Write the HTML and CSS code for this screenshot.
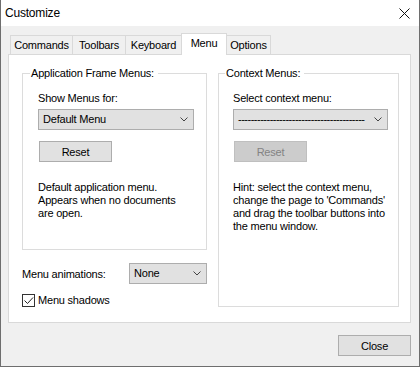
FILE: index.html
```html
<!DOCTYPE html>
<html lang="en">
<head>
  <meta charset="UTF-8">
  <title>Customize</title>
  <link rel="stylesheet" href="styles.css">
</head>
<body>
  <div class="window">
    <div class="titlebar">
      <span class="title">Customize</span>
      <svg class="close-x" width="11" height="11" viewBox="0 0 11 11">
        <path d="M0.5 0.5 L10.5 10.5 M10.5 0.5 L0.5 10.5" stroke="#111" stroke-width="1" fill="none"/>
      </svg>
    </div>

    <div class="client">
      <div class="tabs">
        <div class="tab tab-commands">Commands</div>
        <div class="tab tab-toolbars">Toolbars</div>
        <div class="tab tab-keyboard">Keyboard</div>
        <div class="tab tab-menu selected">Menu</div>
        <div class="tab tab-options">Options</div>
      </div>

      <div class="panel">
        <div class="left-col">
          <div class="group group-app">
            <div class="legend">Application Frame Menus:</div>
            <div class="label">Show Menus for:</div>
            <div class="combo combo-wide">
              <span>Default Menu</span>
              <svg class="chev" width="8" height="5" viewBox="0 0 8 5"><path d="M0.5 0.5 L4 4 L7.5 0.5" stroke="#444" fill="none"/></svg>
            </div>
            <div class="btn btn-reset">Reset</div>
            <p class="note">Default application menu.<br>Appears when no documents<br>are open.</p>
          </div>

          <div class="anim-row">
            <span>Menu animations:</span>
            <div class="combo combo-small">
              <span>None</span>
              <svg class="chev" width="8" height="5" viewBox="0 0 8 5"><path d="M0.5 0.5 L4 4 L7.5 0.5" stroke="#444" fill="none"/></svg>
            </div>
          </div>

          <div class="check-row">
            <span class="checkbox">
              <svg width="11" height="11" viewBox="0 0 11 11"><path d="M1.5 5.5 L4.5 8.5 L10 2.5" stroke="#222" fill="none"/></svg>
            </span>
            <span>Menu shadows</span>
          </div>
        </div>

        <div class="group group-ctx">
          <div class="legend">Context Menus:</div>
          <div class="label">Select context menu:</div>
          <div class="combo combo-ctx">
            <span class="dashes">----------------------------------------</span>
            <svg class="chev" width="8" height="5" viewBox="0 0 8 5"><path d="M0.5 0.5 L4 4 L7.5 0.5" stroke="#444" fill="none"/></svg>
          </div>
          <div class="btn btn-reset disabled">Reset</div>
          <p class="note">Hint: select the context menu,<br>change the page to 'Commands'<br>and drag the toolbar buttons into<br>the menu window.</p>
        </div>
      </div>

      <div class="footer">
        <div class="btn btn-close">Close</div>
      </div>
    </div>
  </div>
</body>
</html>
```

FILE: styles.css
```css
* {
  box-sizing: border-box;
}
body {
  margin: 0;
  font-family: 'Liberation Sans', Arial, sans-serif;
  font-size: 11px;
  letter-spacing: -0.2px;
  color: #000;
  background: #fff;
}
.window {
  width: 420px;
  height: 367px;
  border: 1px solid #6e6e6e;
  border-top: none;
  background: #f0f0f0;
  display: flex;
  flex-direction: column;
}
.titlebar {
  height: 26px;
  background: #fff;
  display: flex;
  align-items: center;
  justify-content: space-between;
  padding-left: 4px;
  padding-right: 9px;
}
.title {
  font-size: 12px;
  line-height: 26px;
}
.close-x {
  margin-top: 1px;
}

/* tabs */
.tabs {
  display: flex;
  align-items: flex-end;
  height: 21px;
  margin-top: 7px;
  margin-left: 9px;
}
.tab {
  height: 19px;
  line-height: 18px;
  text-align: center;
  background: #f0f0f0;
  border-top: 1px solid #d9d9d9;
  border-left: 1px solid #d9d9d9;
}
.tab-commands { width: 62px; }
.tab-toolbars { width: 53px; }
.tab-keyboard { width: 56px; }
.tab-options {
  width: 44px;
  border-left: none;
  border-right: 1px solid #d9d9d9;
}
.tab.selected {
  width: 46px;
  height: 22px;
  margin-bottom: -1px;
  background: #fff;
  border-right: 1px solid #d9d9d9;
  position: relative;
  z-index: 1;
}

.panel {
  width: 403px;
  height: 269px;
  margin-left: 7px;
  background: #fff;
  border: 1px solid #d9d9d9;
  padding-top: 18px;
  display: flex;
  align-items: flex-start;
}
.left-col {
  width: 185px;
  margin-left: 13px;
}
.group {
  border: 1px solid #dcdcdc;
}
.group-app {
  height: 177px;
  padding-left: 15px;
}
.group-ctx {
  width: 181px;
  height: 234px;
  margin-left: 11px;
  padding-left: 14px;
}
.legend {
  display: table;
  line-height: 13px;
  margin-top: -7px;
  margin-left: -8px;
  padding: 0 4px 0 1px;
  background: #fff;
}
.label {
  line-height: 13px;
  margin-top: 12px;
}

.combo {
  height: 21px;
  border: 1px solid #adadad;
  background: #e1e1e1;
  display: flex;
  align-items: center;
  justify-content: space-between;
  padding: 0 5px 0 4px;
  line-height: 13px;
}
.combo-wide {
  width: 156px;
  margin-top: 4px;
}
.combo-ctx {
  width: 155px;
  margin-top: 4px;
}
.combo-small {
  width: 78px;
}
.dashes {
  white-space: nowrap;
  letter-spacing: -0.5px;
}

.btn {
  width: 73px;
  height: 21px;
  border: 1px solid #adadad;
  background: #e1e1e1;
  display: flex;
  align-items: center;
  justify-content: center;
}
.btn-reset {
  margin-top: 11px;
  margin-left: 1px;
}
.btn.disabled {
  background: #cccccc;
  border-color: #bfbfbf;
  color: #838383;
}
.note {
  margin: 19px 0 0;
  line-height: 13px;
}

.anim-row {
  margin-top: 13px;
  display: flex;
  align-items: center;
  justify-content: space-between;
}
.check-row {
  margin-top: 10px;
  display: flex;
  align-items: center;
  gap: 3px;
  line-height: 13px;
}
.checkbox {
  width: 13px;
  height: 13px;
  border: 1px solid #333;
  background: #fff;
  display: flex;
}

.footer {
  width: 403px;
  margin-left: 7px;
  margin-top: 12px;
  display: flex;
  justify-content: flex-end;
}
```
